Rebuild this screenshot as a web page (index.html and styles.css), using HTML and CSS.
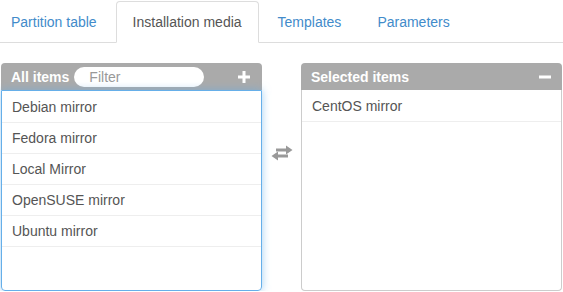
FILE: index.html
```html
<!DOCTYPE html>
<html>
<head>
<meta charset="utf-8">
<link rel="stylesheet" href="styles.css">
</head>
<body>
<ul class="tabs">
  <li class="tab"><a>Partition table</a></li>
  <li class="tab active"><a>Installation media</a></li>
  <li class="tab"><a>Templates</a></li>
  <li class="tab"><a>Parameters</a></li>
</ul>
<div class="dual">
  <div class="panel">
    <div class="panel-head">
      <span class="title">All items</span>
      <span class="filter">Filter</span>
      <span class="spacer"></span>
      <svg class="ico" width="12" height="12" viewBox="0 0 12 12"><rect x="4.5" y="0" width="3" height="12" fill="#fff"/><rect x="0" y="4.5" width="12" height="3" fill="#fff"/></svg>
    </div>
    <ul class="list focus">
      <li>Debian mirror</li>
      <li>Fedora mirror</li>
      <li>Local Mirror</li>
      <li>OpenSUSE mirror</li>
      <li>Ubuntu mirror</li>
    </ul>
  </div>
  <div class="middle">
    <svg width="22" height="16" viewBox="0 0 22 16">
      <path d="M5 3.5 H15 V0.5 L21.5 5 L15 9.5 V6.5 H5 Z" fill="#999"/>
      <path d="M17 9.5 H7 V6.5 L0.5 11 L7 15.5 V12.5 H17 Z" fill="#999"/>
    </svg>
  </div>
  <div class="panel">
    <div class="panel-head">
      <span class="title">Selected items</span>
      <span class="spacer"></span>
      <svg class="ico minus" width="12" height="12" viewBox="0 0 12 12"><rect x="0" y="4.5" width="12" height="3" fill="#fff"/></svg>
    </div>
    <ul class="list">
      <li>CentOS mirror</li>
    </ul>
  </div>
</div>
</body>
</html>
```
FILE: styles.css
```css
* { box-sizing: border-box; }
html, body { margin: 0; padding: 0; background: #fff; }
body {
  font-family: "Liberation Sans", Arial, sans-serif;
  font-size: 14px;
  color: #555;
  padding: 1px 1px 0 1px;
  overflow: hidden;
}
.tabs {
  list-style: none;
  margin: 0 -1px 0 -7px;
  padding: 0;
  display: flex;
  border-bottom: 1px solid #ddd;
  height: 42px;
}
.tab { margin-right: 2px; margin-bottom: -1px; }
.tab a {
  display: block;
  padding: 10px 16px;
  line-height: 20px;
  border: 1px solid transparent;
  border-radius: 4px 4px 0 0;
  color: #428bca;
}
.tab.active a {
  color: #555;
  background: #fff;
  border-color: #ddd #ddd transparent #ddd;
  height: 42px;
}
.dual {
  display: flex;
  margin-top: 20px;
}
.panel {
  width: 261px;
  display: flex;
  flex-direction: column;
}
.panel-head {
  background: #aaa;
  height: 27px;
  border-radius: 4px 4px 0 0;
  display: flex;
  align-items: center;
  padding: 0 12px 0 10px;
  color: #fff;
  font-weight: bold;
}
.title { line-height: 20px; }
.filter {
  margin-left: 5px;
  width: 130px;
  height: 20px;
  background: #fff;
  border-radius: 10px;
  color: #999;
  font-weight: normal;
  padding-left: 15px;
  line-height: 20px;
}
.spacer { flex: 1; }
.ico { display: block; }
.minus { margin-right: -1px; }
.list {
  list-style: none;
  margin: 0;
  padding: 1px 0 0 0;
  height: 201px;
  border: 1px solid #ccc;
  border-top: none;
  border-radius: 0 0 4px 4px;
}
.list.focus {
  border: 1px solid #66afe9;
  padding-top: 0;
  box-shadow: 0 0 8px rgba(102, 175, 233, 0.6);
}
.list li {
  height: 31px;
  line-height: 31px;
  padding-left: 10px;
  border-bottom: 1px solid #eee;
}
.list.focus li:first-child { height: 32px; line-height: 32px; }
.middle {
  width: 39px;
  display: flex;
  align-items: flex-start;
  justify-content: center;
  padding-top: 82px;
}
```
